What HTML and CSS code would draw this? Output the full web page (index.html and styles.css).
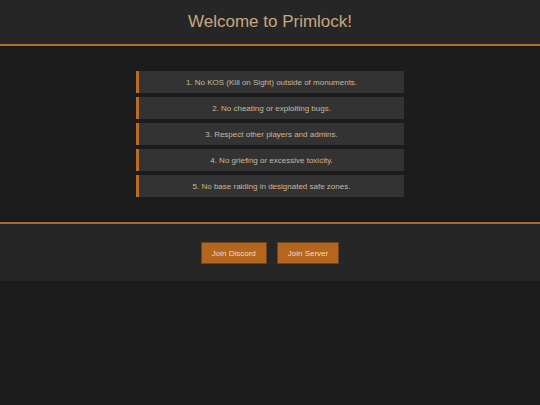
FILE: index.html
```html
<!DOCTYPE html>
<html lang="en">
<head>
<meta charset="utf-8">
<title>Primlock</title>
<link rel="stylesheet" href="styles.css">
</head>
<body>
<header class="header">
  <h1 class="title">Welcome to Primlock!</h1>
</header>
<main class="main">
  <ul class="rules">
    <li class="rule">1. No KOS (Kill on Sight) outside of monuments.</li>
    <li class="rule">2. No cheating or exploiting bugs.</li>
    <li class="rule">3. Respect other players and admins.</li>
    <li class="rule">4. No griefing or excessive toxicity.</li>
    <li class="rule">5. No base raiding in designated safe zones.</li>
  </ul>
</main>
<footer class="footer">
  <a class="btn" href="#">Join Discord</a>
  <a class="btn" href="#">Join Server</a>
</footer>
</body>
</html>
```

FILE: styles.css
```css
* { box-sizing: border-box; }
html, body { margin: 0; padding: 0; }
body {
  background: #1c1c1c;
  font-family: "Liberation Sans", Arial, sans-serif;
  color: #c8b89e;
  width: 540px;
  height: 405px;
}
.header {
  background: #262626;
  height: 46px;
  border-bottom: 2px solid #b86c26;
  display: flex;
  align-items: center;
  justify-content: center;
}
.title {
  margin: 0;
  font-size: 17px;
  font-weight: normal;
  color: #c8a87e;
}
.main {
  padding: 25px 0;
  display: flex;
  justify-content: center;
}
.rules {
  list-style: none;
  margin: 0;
  padding: 0;
  width: 268px;
  display: flex;
  flex-direction: column;
  gap: 4px;
}
.rule {
  height: 22px;
  background: #333333;
  border-left: 3px solid #b86c26;
  display: flex;
  align-items: center;
  justify-content: center;
  font-size: 8px;
  color: #c8b89e;
}
.footer {
  background: #262626;
  border-top: 2px solid #a8682c;
  height: 59px;
  padding-top: 18px;
  display: flex;
  justify-content: center;
  align-items: flex-start;
  gap: 10px;
}
.btn {
  height: 22px;
  padding: 0 10px;
  background: #b5661e;
  border: 1px solid #6e4420;
  color: #f2dcc0;
  font-size: 8px;
  text-decoration: none;
  display: flex;
  align-items: center;
}
```
